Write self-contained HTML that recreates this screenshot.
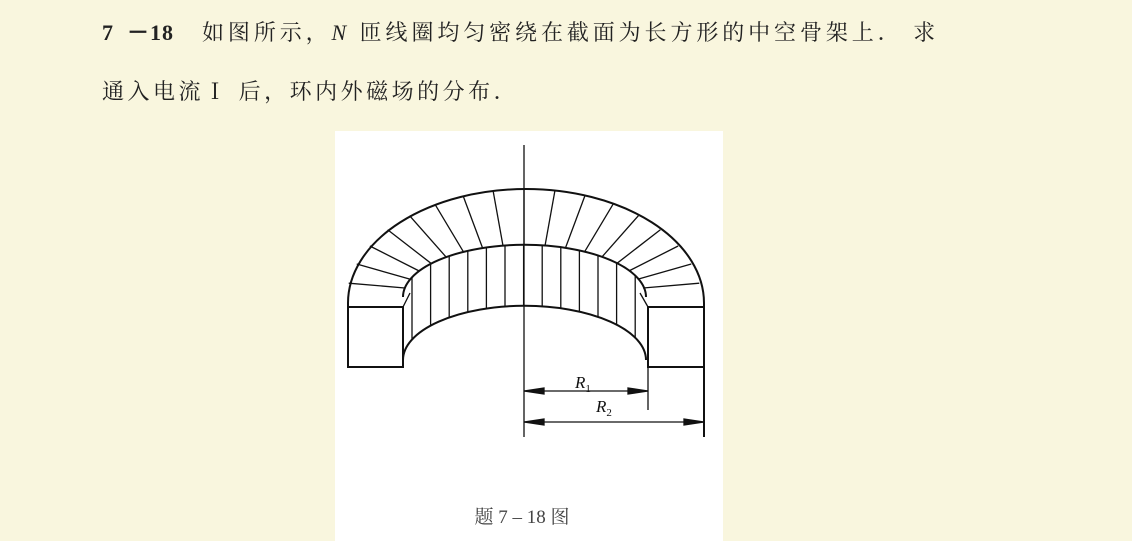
<!DOCTYPE html>
<html><head><meta charset="utf-8"><style>
html,body{margin:0;padding:0}
body{width:1132px;height:539px;background:#f9f6de;position:relative;overflow:hidden;font-family:"Noto Serif CJK SC",serif;color:#222}
.l{position:absolute;left:102px;font-size:22px;white-space:nowrap;line-height:26px}
.box{position:absolute;left:335px;top:131px;width:388px;height:410px;background:#fff}
</style></head><body>
<div class="l" style="top:19px;letter-spacing:3.9px"><b style="font-family:'Liberation Serif',serif;font-size:22px;letter-spacing:1px">7 &nbsp;－18</b><span style="display:inline-block;width:28px"></span>如图所示，<i style="font-family:'Liberation Serif',serif">N</i> 匝线圈均匀密绕在截面为长方形的中空骨架上．&nbsp;求</div>
<div class="l" style="top:78px;letter-spacing:3.5px">通入电流Ｉ 后，环内外磁场的分布．</div>
<div class="box"></div>
<svg id="s" width="1132" height="539" style="position:absolute;left:0;top:0" stroke="#111" fill="none" stroke-width="1.3">
<line x1="524" y1="145" x2="524" y2="437"/>
<path d="M348 307 L348 303 A178 114 0 0 1 704 303 L704 307" stroke-width="2"/>
<path d="M403 297 A121 52 0 0 1 646 297" stroke-width="2"/>
<path d="M403 360 A121 54 0 0 1 646 360" stroke-width="2"/>
<rect x="348" y="307" width="55" height="60" stroke-width="2"/>
<rect x="648" y="307" width="56" height="60" stroke-width="2"/>
<line x1="403" y1="307" x2="410" y2="293"/><line x1="648" y1="307" x2="640" y2="293"/>
<line x1="648" y1="367" x2="648" y2="410"/><line x1="704" y1="367" x2="704" y2="437" stroke-width="2"/>
<line x1="524" y1="391" x2="648" y2="391"/><line x1="524" y1="422" x2="704" y2="422"/>
<path d="M524 391 l20 -3 v6z M648 391 l-20 -3 v6z M524 422 l20 -3 v6z M704 422 l-20 -3 v6z" fill="#111"/>
<text x="575" y="388" font-style="italic" font-size="17" fill="#111" stroke="none" font-family="Liberation Serif,serif">R<tspan font-size="11" dy="4" font-style="normal">1</tspan></text>
<text x="596" y="412" font-style="italic" font-size="17" fill="#111" stroke="none" font-family="Liberation Serif,serif">R<tspan font-size="11" dy="4" font-style="normal">2</tspan></text>
<text x="522" y="523" text-anchor="middle" font-size="19" fill="#444" stroke="none" font-family="Liberation Serif,Noto Serif CJK SC,serif">题 7 – 18 图</text>
<g id="g"></g>
</svg>
<script>
var g=document.getElementById('g'),h='';
for(var i=1;i<18;i++){var t=Math.PI*i/18,c=Math.cos(t),s=Math.sin(t);
h+='<line x1="'+(524+178*c)+'" y1="'+(303-114*s)+'" x2="'+(524+121*c)+'" y2="'+(297-52*s)+'"/>';}
for(var x=412;x<640;x+=18.6){var u=(x-524.5)/121.5,q=Math.sqrt(Math.max(0,1-u*u));
h+='<line x1="'+x+'" y1="'+(297-52*q)+'" x2="'+x+'" y2="'+(360-54*q)+'"/>';}
g.innerHTML=h;
</script>
</body></html>
